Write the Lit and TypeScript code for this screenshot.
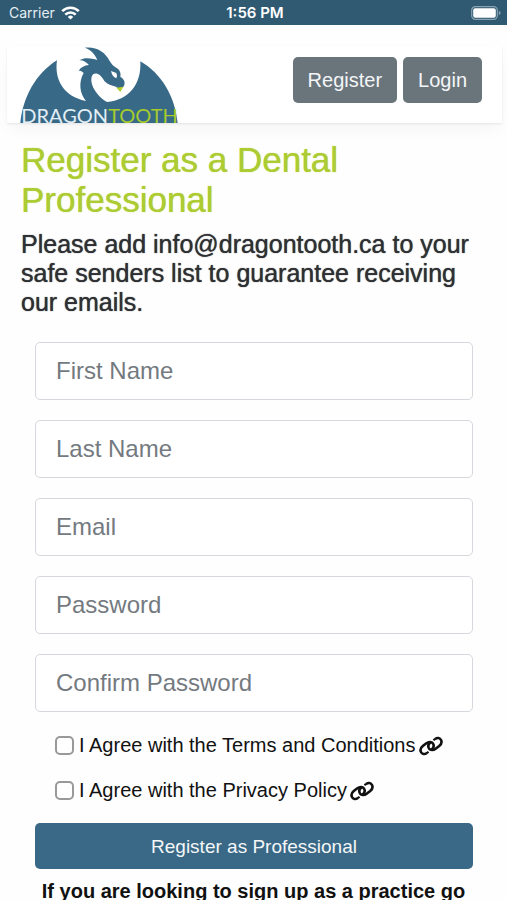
import { LitElement, html, css } from "lit";
import { customElement } from "lit/decorators.js";

@customElement("status-bar")
class StatusBar extends LitElement {
  static styles = css`
    :host {
      display: grid;
      grid-template-columns: 1fr auto 1fr;
      align-items: center;
      height: 25px;
      padding: 0 6px 0 9px;
      background: #2f5a72;
      color: #e6eef3;
      font: 14px/25px Inter, "Liberation Sans", sans-serif;
    }
    .left {
      display: flex;
      align-items: center;
      gap: 6px;
    }
    .time {
      font-weight: 600;
      font-size: 15px;
      color: #fff;
    }
    .battery {
      justify-self: end;
    }
    svg {
      display: block;
    }
  `;
  render() {
    return html`
      <span class="left">
        Carrier
        <svg width="19" height="14" viewBox="0 0 19 14" fill="none" stroke="#fff" stroke-width="2.6">
          <path d="M1.2 5.2a11.8 11.8 0 0 1 16.6 0" />
          <path d="M4.3 8.6a7.4 7.4 0 0 1 10.4 0" />
          <path d="M9.5 13.6 6.8 10.9a3.9 3.9 0 0 1 5.4 0z" fill="#fff" stroke="none" />
        </svg>
      </span>
      <span class="time">1:56 PM</span>
      <svg class="battery" width="30" height="14" viewBox="0 0 30 14">
        <rect x=".7" y=".7" width="25.6" height="12.6" rx="3.6" fill="none" stroke="#8ba3b1" stroke-width="1.2" />
        <rect x="2.2" y="2.2" width="22.6" height="9.6" rx="2" fill="#fff" />
        <path d="M27.8 4.8q1.8 .8 1.8 2.2t-1.8 2.2z" fill="#8ba3b1" />
      </svg>
    `;
  }
}

@customElement("brand-logo")
class BrandLogo extends LitElement {
  static styles = css`
    :host {
      display: block;
    }
    svg {
      display: block;
      overflow: visible;
    }
    .word {
      font-family: Lato, "Liberation Sans", sans-serif;
      font-size: 60px;
    }
  `;
  render() {
    return html`
      <svg width="158" height="77" viewBox="15 33 474 231" role="img" aria-label="Dragon Tooth">
        <path
          fill="#386a88"
          d="M16 264C24 186 62 116 126 76C118 130 142 184 213 198C194 176 190 142 206 114C198 108 196 106 191 109C195 98 208 91 222 90C212 81 204 75 193 76C208 66 228 69 247 75C240 58 228 44 209 38C244 34 270 50 284 78C290 88 296 94 306 100C316 106 318 118 316 126C326 130 332 142 327 152C322 162 310 162 303 155C290 152 278 148 268 138C256 114 238 110 231 122C222 146 244 182 276 201C340 196 380 150 376 79C440 116 480 184 488 264Z"
        />
        <path fill="#fff" d="M288 108L304 114Q308 123 304 130Q292 126 288 108Z" />
        <path fill="#b2cf2d" d="M304 158L325 155L316 171Z" />
        <text class="word" x="19" y="263" fill="#e3eef5">DRAGON<tspan fill="#a6cb2c">TOOTH</tspan></text>
      </svg>
    `;
  }
}

@customElement("app-root")
class AppRoot extends LitElement {
  static styles = css`
    :host {
      display: block;
      min-height: 100vh;
      background: #fefefe;
      color: #111;
      font-family: "Liberation Sans", Arial, sans-serif;
      font-size: 20px;
      line-height: 29px;
    }
    * {
      box-sizing: border-box;
    }
    .navbar {
      display: flex;
      justify-content: space-between;
      align-items: flex-end;
      margin: 21px 5px 0 7px;
      padding: 0 20px 0 13px;
      background: #fff;
      box-shadow: 0 8px 16px -2px rgba(0, 0, 0, 0.04), 0 1px 2px rgba(0, 0, 0, 0.08);
    }
    .actions {
      display: flex;
      gap: 6px;
      padding-bottom: 20px;
    }
    button {
      height: 46px;
      padding: 0 15px;
      border: 0;
      border-radius: 5px;
      background: #6a747b;
      color: #f4f6f8;
      font: 20px/29px "Liberation Sans", Arial, sans-serif;
    }
    main {
      padding: 17px 21px 0;
    }
    h1,
    h2,
    p {
      margin: 0;
    }
    h1 {
      font-size: 35px;
      line-height: 40px;
      font-weight: 400;
      color: #adcb32;
      text-shadow: 0 0 1px #adcb32;
    }
    h2 {
      margin-top: 10px;
      font-size: 25px;
      line-height: 29px;
      font-weight: 400;
      color: #2f3033;
      text-shadow: 0 0 1px #2f3033;
    }
    form {
      display: flex;
      flex-direction: column;
      gap: 20px;
      padding: 25px 13px 0 14px;
    }
    .field {
      width: 100%;
      height: 58px;
      padding: 0 20px;
      border: 1px solid #d5d9dd;
      border-radius: 5px;
      background: #fff;
      color: #495057;
      font: 24px/36px "Liberation Sans", Arial, sans-serif;
    }
    .field::placeholder {
      color: #747a80;
      opacity: 1;
    }
    .checks {
      display: flex;
      flex-direction: column;
      gap: 16px;
      padding-left: 20px;
      margin-top: -1px;
    }
    .check {
      display: flex;
      align-items: center;
      gap: 3px;
    }
    .check label {
      display: flex;
      align-items: center;
      gap: 5px;
    }
    input[type="checkbox"] {
      appearance: none;
      width: 19px;
      height: 19px;
      margin: 0;
      border: 2px solid #999;
      border-radius: 5px;
      background: #fff;
    }
    a {
      color: #111;
    }
    .check svg {
      display: block;
    }
    .submit {
      width: 100%;
      margin-top: -2px;
      background: #396986;
      font-size: 19px;
    }
    p {
      margin: 8px 10px 0;
      font-weight: 700;
      text-align: center;
    }
  `;

  private fields = [
    { id: "first", label: "First Name", type: "text" },
    { id: "last", label: "Last Name", type: "text" },
    { id: "email", label: "Email", type: "email" },
    { id: "password", label: "Password", type: "password" },
    { id: "confirm", label: "Confirm Password", type: "password" },
  ];

  private agreements = [
    { id: "terms", label: "Terms and Conditions" },
    { id: "privacy", label: "Privacy Policy" },
  ];

  render() {
    return html`
      <status-bar></status-bar>
      <nav class="navbar">
        <brand-logo></brand-logo>
        <div class="actions">
          <button type="button">Register</button>
          <button type="button">Login</button>
        </div>
      </nav>
      <main>
        <h1>Register as a Dental Professional</h1>
        <h2>Please add info@dragontooth.ca to your safe senders list to guarantee receiving our emails.</h2>
        <form>
          ${this.fields.map(
            (f) => html`<input class="field" id=${f.id} type=${f.type} placeholder=${f.label} aria-label=${f.label} />`
          )}
          <div class="checks">
            ${this.agreements.map(
              (a) => html`
                <div class="check">
                  <label for=${a.id}><input type="checkbox" id=${a.id} />I Agree with the ${a.label}</label>
                  <a href="#${a.id}" aria-label=${a.label}>
                    <svg width="24" height="20" viewBox="0 0 24 20" fill="none" stroke="currentColor" stroke-width="2.6">
                      <path d="M7.6 17.2C5.6 18.6 3.4 18.2 2.2 16.4C1 14.4 1.6 11.8 3.8 10L7.4 7.2C9.8 5.4 12.6 5.6 14 7.6C15.4 9.8 14.4 12.2 12.4 13.8" />
                      <path d="M16.4 2.8C18.4 1.4 20.6 1.8 21.8 3.6C23 5.6 22.4 8.2 20.2 10L16.6 12.8C14.2 14.6 11.4 14.4 10 12.4C8.6 10.2 9.6 7.8 11.6 6.2" />
                      <path d="M7.2 17.4L9.6 15.8M16.8 2.6L14.4 4.2" stroke-width="2.2" />
                    </svg>
                  </a>
                </div>
              `
            )}
          </div>
          <button class="submit" type="button">Register as Professional</button>
        </form>
        <p>If you are looking to sign up as a practice go</p>
      </main>
    `;
  }
}
